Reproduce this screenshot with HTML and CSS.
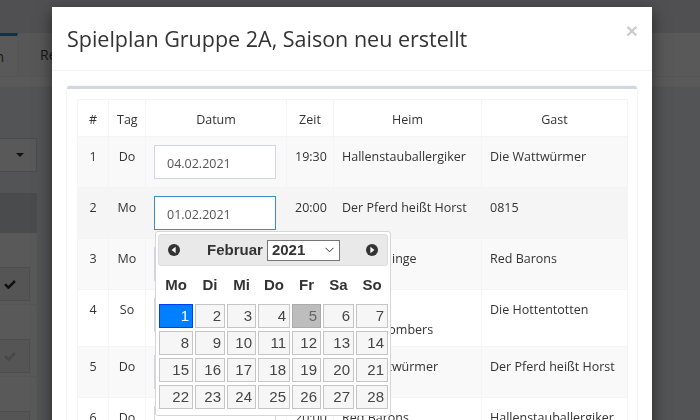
FILE: index.html
```html
<!DOCTYPE html>
<html lang="de">
<head>
<meta charset="utf-8">
<title>Spielplan</title>
<link rel="stylesheet" href="styles.css">
</head>
<body>
<div class="app">
  <div class="app-top"></div>
  <div class="app-tabs">
    <div class="tab tab-active"><span>Spielplan</span></div>
    <div class="tab"><span>Resultate</span></div>
  </div>
  <div class="app-tabgap"></div>
  <div class="side">
    <div class="fake-select"><span class="caret"></span></div>
    <div class="fake-bar"></div>
    <div class="fake-panel">
      <div class="fake-row"><div class="check-btn"><svg width="12" height="10" viewBox="0 0 12 10"><path d="M1 5.2 L4.4 8.6 L11 2" fill="none" stroke="#333" stroke-width="2.6"/></svg></div></div>
      <div class="fake-row"><div class="check-btn"><svg width="12" height="10" viewBox="0 0 12 10"><path d="M1 5.2 L4.4 8.6 L11 2" fill="none" stroke="#ccc" stroke-width="2.6"/></svg></div></div>
      <div class="fake-row"><div class="check-btn"></div></div>
    </div>
  </div>
</div>

<div class="backdrop"></div>

<div class="modal">
  <div class="modal-header">
    <h4 class="modal-title">Spielplan Gruppe 2A, Saison neu erstellt</h4>
    <span class="close">&times;</span>
  </div>
  <div class="modal-body">
    <div class="box">
      <table class="plan">
        <colgroup>
          <col class="c-nr"><col class="c-tag"><col class="c-datum"><col class="c-zeit"><col class="c-heim"><col class="c-gast">
        </colgroup>
        <thead>
          <tr><th>#</th><th>Tag</th><th>Datum</th><th>Zeit</th><th>Heim</th><th>Gast</th></tr>
        </thead>
        <tbody>
          <tr class="odd">
            <td class="center">1</td><td class="center">Do</td>
            <td class="input-cell"><div class="date-wrap"><input class="date" type="text" value="04.02.2021"></div></td>
            <td>19:30</td><td>Hallenstauballergiker</td><td>Die Wattwürmer</td>
          </tr>
          <tr class="hover">
            <td class="center">2</td><td class="center">Mo</td>
            <td class="input-cell">
              <div class="date-wrap">
                <input class="date focus" type="text" value="01.02.2021">
                <div class="dp">
                  <div class="dp-head">
                    <span class="dp-nav"><svg width="12" height="12" viewBox="0 0 12 12"><circle cx="6" cy="6" r="6" fill="#333"/><path d="M7.6 2.8 L3.6 6 L7.6 9.2 Z" fill="#fff"/></svg></span>
                    <div class="dp-title">
                      <span class="dp-month">Februar</span>
                      <span class="dp-year">2021<svg width="9" height="6" viewBox="0 0 9 6"><path d="M0.5 0.8 L4.5 4.8 L8.5 0.8" fill="none" stroke="#333" stroke-width="1"/></svg></span>
                    </div>
                    <span class="dp-nav"><svg width="12" height="12" viewBox="0 0 12 12"><circle cx="6" cy="6" r="6" fill="#333"/><path d="M4.4 2.8 L8.4 6 L4.4 9.2 Z" fill="#fff"/></svg></span>
                  </div>
                  <div class="dp-grid dp-names">
                    <span>Mo</span><span>Di</span><span>Mi</span><span>Do</span><span>Fr</span><span>Sa</span><span>So</span>
                  </div>
                  <div class="dp-grid dp-days">
                    <span class="day active">1</span><span class="day">2</span><span class="day">3</span><span class="day">4</span><span class="day today">5</span><span class="day">6</span><span class="day">7</span>
                    <span class="day">8</span><span class="day">9</span><span class="day">10</span><span class="day">11</span><span class="day">12</span><span class="day">13</span><span class="day">14</span>
                    <span class="day">15</span><span class="day">16</span><span class="day">17</span><span class="day">18</span><span class="day">19</span><span class="day">20</span><span class="day">21</span>
                    <span class="day">22</span><span class="day">23</span><span class="day">24</span><span class="day">25</span><span class="day">26</span><span class="day">27</span><span class="day">28</span>
                  </div>
                </div>
              </div>
            </td>
            <td>20:00</td><td>Der Pferd heißt Horst</td><td>0815</td>
          </tr>
          <tr class="odd">
            <td class="center">3</td><td class="center">Mo</td>
            <td class="input-cell"><div class="date-wrap"><input class="date" type="text" value="08.02.2021"></div></td>
            <td>19:30</td><td>Die Lieblinge</td><td>Red Barons</td>
          </tr>
          <tr>
            <td class="center">4</td><td class="center">So</td>
            <td class="input-cell"><div class="date-wrap"><input class="date" type="text" value="14.02.2021"></div></td>
            <td>18:00</td><td>Hessen Strandbombers</td><td>Die Hottentotten</td>
          </tr>
          <tr class="odd">
            <td class="center">5</td><td class="center">Do</td>
            <td class="input-cell"><div class="date-wrap"><input class="date" type="text" value="18.02.2021"></div></td>
            <td>19:30</td><td>Die Wattwürmer</td><td>Der Pferd heißt Horst</td>
          </tr>
          <tr>
            <td class="center">6</td><td class="center">Do</td>
            <td class="input-cell"><div class="date-wrap"><input class="date" type="text" value="25.02.2021"></div></td>
            <td>20:00</td><td>Red Barons</td><td>Hallenstauballergiker</td>
          </tr>
        </tbody>
      </table>
    </div>
  </div>
</div>
</body>
</html>
```

FILE: styles.css
```css
* { box-sizing: border-box; }

html, body {
  margin: 0;
  width: 700px;
  height: 420px;
  overflow: hidden;
}

body {
  background: #ecf0f5;
  font-family: "Open Sans", "Noto Sans", sans-serif;
  color: #333;
}

/* ---------- background application ---------- */
.app-top {
  height: 33px;
  background: #e4e6ea;
}

.app-tabs {
  height: 44px;
  background: #fff;
  border-bottom: 1px solid #f4f4f4;
  display: flex;
  font-size: 14px;
  color: #444;
}

.tab {
  display: flex;
  align-items: center;
  white-space: nowrap;
  overflow: hidden;
}

.tab-active {
  width: 18px;
  border-top: 3px solid #3c8dbc;
  border-right: 1px solid #f4f4f4;
  justify-content: flex-end;
}

.tab-active span { padding-right: 13px; }

.tab:not(.tab-active) {
  padding-left: 22px;
  width: 120px;
  background: #fafafa;
}

.app-tabgap {
  height: 10px;
  background: #fff;
}

.side {
  width: 37px;
  padding-top: 51px;
}

.fake-select {
  height: 34px;
  background: #fff;
  border: 1px solid #d2d6de;
  border-left: 0;
  display: flex;
  align-items: center;
  justify-content: flex-end;
  padding-right: 12px;
}

.caret {
  width: 0;
  height: 0;
  border-left: 4px solid transparent;
  border-right: 4px solid transparent;
  border-top: 4px solid #333;
}

.fake-bar {
  margin-top: 21px;
  height: 40px;
  background: #d5d7da;
}

.fake-panel {
  background: #fff;
}

.fake-row {
  height: 72px;
  padding-top: 34px;
  border-bottom: 1px solid #f4f4f4;
}

.check-btn {
  width: 30px;
  height: 34px;
  border: 1px solid #ddd;
  border-left: 0;
  background: #f4f4f4;
  display: flex;
  align-items: center;
  justify-content: center;
  padding-right: 10px;
}

.backdrop {
  position: fixed;
  inset: 0;
  background: rgba(0, 0, 0, 0.65);
}

/* ---------- modal ---------- */
.modal {
  position: absolute;
  left: 52px;
  top: 7px;
  width: 600px;
  height: 480px;
  background: #fff;
  box-shadow: 0 5px 15px rgba(0, 0, 0, 0.5);
}

.modal-header {
  padding: 15px;
  border-bottom: 1px solid #f4f4f4;
  display: flex;
  justify-content: space-between;
  align-items: flex-start;
}

.modal-title {
  margin: 0;
  font-size: 21.5px;
  line-height: 33px;
  font-weight: 400;
  color: #333;
}

.close {
  font: bold 21px/1 "Liberation Sans", Arial, sans-serif;
  color: #000;
  opacity: 0.2;
  margin-top: -2px;
  margin-right: -1px;
}

.modal-body {
  padding: 15px;
}

.box {
  border-top: 3px solid #d2d6de;
  border-radius: 3px;
  box-shadow: 0 0 0 1px rgba(0, 0, 0, 0.03), 0 1px 1px rgba(0, 0, 0, 0.1);
  padding: 10px;
  background: #fff;
}

/* ---------- table ---------- */
.plan {
  width: 550px;
  table-layout: fixed;
  border-collapse: collapse;
  border: 1px solid #f4f4f4;
  font-size: 12.5px;
}

.c-nr { width: 31px; }
.c-tag { width: 37px; }
.c-datum { width: 141px; }
.c-zeit { width: 47px; }
.c-heim { width: 148px; }
.c-gast { width: 146px; }

.plan th,
.plan td {
  border: 1px solid #f4f4f4;
  padding: 10px 8px 6px;
  line-height: 20px;
  vertical-align: top;
  text-align: left;
}

.plan td.input-cell {
  padding: 8px;
}

.plan th {
  font-weight: 400;
  text-align: center;
}

.plan td.center { text-align: center; }

.plan tr.odd { background: #f9f9f9; }
.plan tr.hover { background: #f5f5f5; }

.date-wrap {
  position: relative;
}

.date {
  display: block;
  width: 122px;
  height: 34px;
  padding: 7px 12px 5px;
  margin: 0;
  border: 1px solid #d2d6de;
  border-radius: 0;
  background: #fff;
  font: 12.5px/20px "Open Sans", sans-serif;
  color: #555;
  outline: none;
}

.date.focus { border-color: #3c8dbc; }

/* ---------- datepicker ---------- */
.dp {
  position: absolute;
  top: calc(100% + 1px);
  left: 1px;
  width: 236px;
  padding: 2px 2px 6px;
  background: #fff;
  border: 1px solid #d6d6d6;
  border-radius: 3px;
  font-family: "Liberation Sans", Arial, sans-serif;
  color: #333;
  z-index: 5;
}

.dp-head {
  height: 32px;
  background: #e9e9e9;
  border: 1px solid #dddddd;
  border-radius: 3px;
  display: flex;
  align-items: center;
  justify-content: space-between;
  padding: 0 9px 0 9px;
}

.dp-nav {
  display: flex;
  width: 12px;
  height: 12px;
}

.dp-title {
  display: flex;
  align-items: center;
  gap: 4px;
  font-size: 15px;
  font-weight: 700;
  margin-left: 1px;
}

.dp-year {
  display: flex;
  align-items: center;
  justify-content: space-between;
  width: 73px;
  height: 21px;
  padding: 0 5px 0 4px;
  border: 1px solid #767676;
  background: #fff;
}

.dp-grid {
  display: grid;
  grid-template-columns: 34px 30px 29px 32px 29px 31px 32px;
  column-gap: 2px;
  margin: 0 1px;
}

.dp-names {
  height: 35px;
  align-items: center;
  font-size: 15px;
  font-weight: 700;
  text-align: center;
  margin-top: 1px;
}

.dp-days {
  row-gap: 3px;
  margin-top: 2px;
}

.day {
  height: 24px;
  border: 1px solid #c5c5c5;
  background: #f6f6f6;
  color: #454545;
  font-size: 15px;
  line-height: 22px;
  text-align: right;
  padding-right: 3px;
}

.day.active {
  background: #007fff;
  border-color: #003eff;
  color: #fff;
}

.day.today {
  background: #bdbdbd;
  border-color: #aaaaaa;
  color: #666;
}
```
